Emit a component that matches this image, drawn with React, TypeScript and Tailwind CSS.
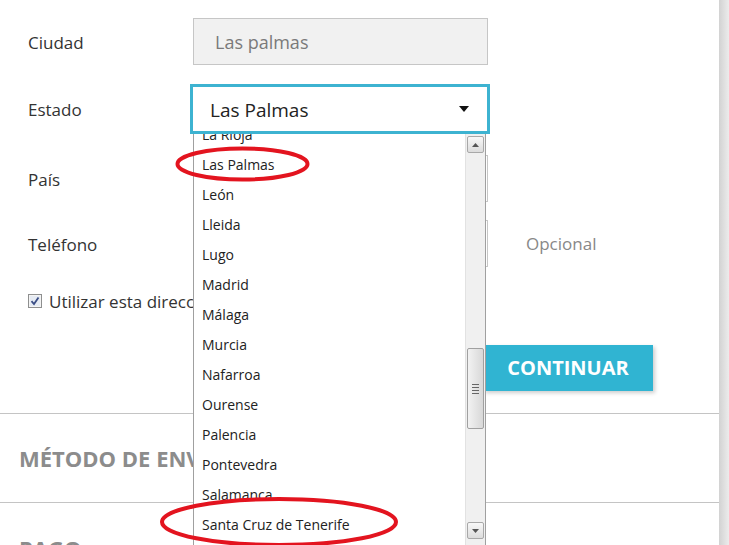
import React from 'react';

const provinces = [
  'La Rioja',
  'Las Palmas',
  'León',
  'Lleida',
  'Lugo',
  'Madrid',
  'Málaga',
  'Murcia',
  'Nafarroa',
  'Ourense',
  'Palencia',
  'Pontevedra',
  'Salamanca',
  'Santa Cruz de Tenerife',
  'Segovia',
];

const Field: React.FC<{ label: string; children: React.ReactNode; className?: string }> = ({
  label,
  children,
  className,
}) => (
  <div className={`flex items-center ${className ?? ''}`}>
    <label className="w-[165px] shrink-0 pt-[2px] text-[17px] text-[#333]">{label}</label>
    {children}
  </div>
);

const ScrollBar: React.FC = () => (
  <div className="absolute right-0 top-0 bottom-0 w-[20px] bg-[#f0f0f0] border-l border-[#e2e2e2] flex flex-col items-center">
    <span className="mt-[2px] w-[17px] h-[17px] border border-[#a8a8a8] rounded-[2px] bg-gradient-to-b from-[#f8f8f8] to-[#dcdcdc] flex items-center justify-center">
      <svg width="7" height="4" viewBox="0 0 7 4">
        <path d="M0 4 L3.5 0 L7 4 Z" fill="#555" />
      </svg>
    </span>
    <span className="mt-[195px] w-[17px] h-[81px] border border-[#a0a0a0] rounded-[2px] bg-gradient-to-r from-[#f2f2f2] to-[#d8d8d8] flex flex-col items-center justify-center gap-[2px]">
      <span className="w-[7px] h-px bg-[#666]" />
      <span className="w-[7px] h-px bg-[#666]" />
      <span className="w-[7px] h-px bg-[#666]" />
      <span className="w-[7px] h-px bg-[#666]" />
    </span>
    <span className="mt-[93px] w-[17px] h-[17px] border border-[#a8a8a8] rounded-[2px] bg-gradient-to-b from-[#f8f8f8] to-[#dcdcdc] flex items-center justify-center">
      <svg width="7" height="4" viewBox="0 0 7 4">
        <path d="M0 0 L3.5 4 L7 0 Z" fill="#555" />
      </svg>
    </span>
  </div>
);

const Dropdown: React.FC = () => (
  <div className="absolute left-[193px] top-[134px] w-[293px] h-[420px] bg-white border-l border-r border-[#a0a0a0] overflow-hidden z-10">
    <ul className="-mt-[14px] pl-[8px] text-[14px] text-[#222]">
      {provinces.map((p) => (
        <li key={p} className="h-[30px] leading-[30px]">
          {p}
        </li>
      ))}
    </ul>
    <ScrollBar />
  </div>
);

const Annotations: React.FC = () => (
  <svg className="absolute inset-0 z-20 pointer-events-none" width="729" height="545">
    <ellipse cx="242.5" cy="164" rx="65" ry="15.5" fill="none" stroke="#e3141f" strokeWidth="4" />
    <ellipse cx="279" cy="522" rx="117" ry="23" fill="none" stroke="#e3141f" strokeWidth="4" />
  </svg>
);

export default function App() {
  return (
    <div
      className="relative flex w-[729px] h-[545px] overflow-hidden bg-white"
      style={{ fontFamily: '"Open Sans", "Noto Sans", sans-serif' }}
    >
      <div className="w-[719px] shrink-0 bg-white">
        <form className="pl-[28px] pt-[18px]">
          <Field label="Ciudad">
            <div className="w-[295px] h-[47px] bg-[#f1f1f1] border border-[#c6c6c6] flex items-center pl-[21px] pt-[2px] text-[18px] text-[#7a7a7a]">
              Las palmas
            </div>
          </Field>
          <Field label="Estado" className="mt-[19px]">
            <div className="-ml-[3px] w-[300px] h-[50px] border-[3px] border-[#3db3d1] bg-white flex items-center justify-between pl-[17px] pr-[18px] text-[19px] text-[#222]">
              <span className="pt-[2px]">Las Palmas</span>
              <svg width="10" height="6" viewBox="0 0 10 6">
                <path d="M0 0 L10 0 L5 6 Z" fill="#111" />
              </svg>
            </div>
          </Field>
          <Field label="País" className="mt-[21px]">
            <div className="w-[295px] h-[47px] bg-white border border-[#c6c6c6]" />
          </Field>
          <Field label="Teléfono" className="mt-[18px]">
            <div className="w-[295px] h-[47px] bg-white border border-[#c6c6c6]" />
            <span className="ml-[38px] text-[17px] text-[#888]">Opcional</span>
          </Field>
          <div className="mt-[24px] h-[20px] flex items-center gap-[7px] text-[17px] text-[#333]">
            <svg width="14" height="14" viewBox="0 0 14 14">
              <rect x="0.5" y="0.5" width="13" height="13" fill="#f4f4f4" stroke="#8e8f8f" />
              <rect x="2" y="2" width="10" height="10" fill="#e6ebf3" />
              <path d="M3.5 7.2 L6 10 L10.5 3.5" fill="none" stroke="#3b4e86" strokeWidth="1.8" />
            </svg>
            <span className="pt-[1px]">Utilizar esta dirección también para facturación</span>
          </div>
          <div className="mt-[34px] w-[625px] flex justify-end">
            <button
              type="button"
              className="h-[46px] w-[170px] bg-[#30b4d2] text-white font-bold text-[20px] shadow-[2px_2px_4px_rgba(0,0,0,0.2)]"
            >
              CONTINUAR
            </button>
          </div>
        </form>
        <section className="mt-[22px] border-t border-[#c4c4c4] h-[89px] flex items-center pl-[19px]">
          <h2 className="text-[22px] font-bold text-[#8c8c8c] pt-[1px]">MÉTODO DE ENVÍO</h2>
        </section>
        <section className="border-t border-[#c4c4c4] h-[60px] pl-[19px] pt-[29px]">
          <h2 className="text-[22px] font-bold text-[#8c8c8c]">PAGO</h2>
        </section>
      </div>
      <div className="w-[10px] shrink-0 bg-gradient-to-r from-[#d2d2d2] to-[#ececec]" />
      <Dropdown />
      <Annotations />
    </div>
  );
}
